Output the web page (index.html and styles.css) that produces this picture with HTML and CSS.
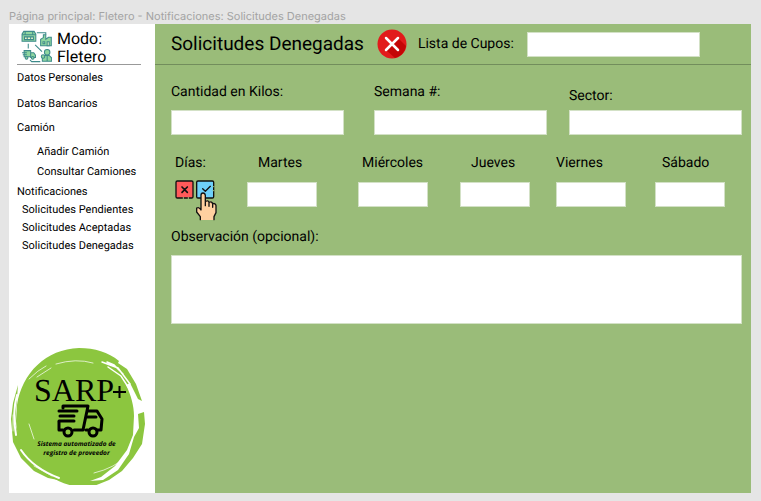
FILE: index.html
```html
<!DOCTYPE html>
<html lang="es">
<head>
<meta charset="utf-8">
<title>Fletero - Solicitudes Denegadas</title>
<link rel="stylesheet" href="styles.css">
</head>
<body>
<p class="caption">Página principal: Fletero - Notificaciones: Solicitudes Denegadas</p>
<div class="frame">
  <aside class="sidebar">
    <div class="mode">
      <svg class="mode-icon" viewBox="0 0 90 96" aria-hidden="true">
        <g fill="#8fd6a0" stroke="#3d8a8a" stroke-width="3">
          <path d="M3 12 8 4h30l5 8v21H3z"/>
          <path d="M3 14h40M12 4v10M34 4v10" />
          <path fill="#e9f5c9" d="M10 20h26v8H10zM18 20v8M28 20v8"/>
          <path d="M57 46V27l8-5V14h7v13l8-6h8v25z"/>
          <path fill="#e9f5c9" d="M64 34h5v6h-5zM76 34h6v12h-6z"/>
          <path d="M9 60h19v18H9zM28 66h9l5 7v7H28z"/>
          <circle cx="16" cy="81" r="4"/><circle cx="34" cy="81" r="4"/>
          <path fill="#e9f5c9" d="M3 66h14M5 72h12"/>
          <circle cx="76" cy="65" r="8"/>
          <path d="M62 91V81l8-7h12l7 7v10zM76 75v15"/>
          <circle cx="64" cy="77" r="5"/>
        </g>
        <path d="M46 8h26v6M21 40v14M41 43l20 20M26 87l5 5h25" fill="none" stroke="#3d8a8a" stroke-width="3"/>
      </svg>
      <p class="mode-name">Modo: Fletero</p>
    </div>
    <nav class="menu">
      <a class="roomy" href="#">Datos Personales</a>
      <a class="group" href="#">Datos Bancarios</a>
      <a class="group" href="#">Camión</a>
      <a class="deep" href="#">Añadir Camión</a>
      <a class="deep" href="#">Consultar Camiones</a>
      <a href="#">Notificaciones</a>
      <a class="sub" href="#">Solicitudes Pendientes</a>
      <a class="sub" href="#">Solicitudes Aceptadas</a>
      <a class="sub" href="#">Solicitudes Denegadas</a>
    </nav>
    <svg class="logo" viewBox="0 0 276 276" role="img" aria-label="SARP+">
      <g transform="scale(2)">
        <path fill="#8cc63f" d="M7 58C12 26 36 2 69 1c16 0 29 4 40 13l-1 2 9 6 9 15 6 17-4-2-8-16-4 2c5 10 8 21 8 31l-1 19-6 15-12 16-14 11-11 4 13-1 15-10 11-16 5-17 5-9-1-14 6-2 1 12-3 20-9 14-11 13-13 9-15 6-16 1C34 134 7 106 6 74z"/>
        <path fill="#8cc63f" d="m8 38-5 18-2 16 2 23 8 16 13 13 14 7 10 2-14-10L13 98 5 77z"/>
        <g fill="none" stroke="#fff" stroke-linecap="round">
          <path stroke-width="2" d="M6 88Q2 66 7 48M11 103q12 18 38 28"/>
          <path stroke-width="1.500" d="m92 15 16 6 12 16M98 20l13 9 11 17M97 15l7 3 9 9"/>
          <path stroke-width=".700" d="M46 17q20-6 37-1M19 32q9-9 17-13M27 30l14-9M24 92l-5-15M3 84V68M24 119l18 10M84 126q21-5 34-18"/>
        </g>
      </g>
      <text class="logo-name" x="48" y="108">SARP</text>
      <text class="tagline" x="133" y="198">Sistema automatizado de</text>
      <text class="tagline" x="133" y="216">registro de proveedor</text>
      <g transform="scale(2)">
        <path d="M103 45h13M109.500 39v12" stroke="#000" stroke-width="2"/>
        <g fill="none" stroke="#000" stroke-width="3" stroke-linejoin="round" stroke-linecap="round">
          <path d="M53 61v-2h25l-5 24H64M49 75v8h4M78 70h8M79 64h8l5 8-1 11h-4M76 83h2"/>
          <path d="M49 64h18M50 69h14M49 74h15"/>
          <circle cx="58" cy="85" r="4"/><circle cx="83" cy="85" r="4"/>
        </g>
      </g>
    </svg>
  </aside>
  <main class="main">
    <header class="topbar">
      <h1>Solicitudes Denegadas</h1>
      <svg class="denied" viewBox="0 0 30 30" aria-hidden="true">
        <circle cx="15" cy="15" r="14.500" fill="#e21b1b"/>
        <path d="m21 9 8 8a14.500 14.500 0 0 1-11 12l-9-8 6-6z" fill="#c40606"/>
        <path d="m9 9 12 12M21 9 9 21" stroke="#fff" stroke-width="2.500" stroke-linecap="round"/>
      </svg>
      <label for="cupos">Lista de Cupos:</label>
      <input id="cupos" type="text">
    </header>
    <form class="form">
      <div class="fields">
        <div class="field"><label for="kilos">Cantidad en Kilos:</label><input id="kilos" type="text"></div>
        <div class="field"><label for="semana">Semana #:</label><input id="semana" type="text"></div>
        <div class="field low"><label for="sector">Sector:</label><input id="sector" type="text"></div>
      </div>
      <div class="days">
        <div class="day pick">
          <span>Días:</span>
          <svg class="pick-icon" viewBox="0 0 126 126" aria-hidden="true">
            <g stroke="#111" stroke-width="4" stroke-linejoin="round" stroke-linecap="round">
              <rect x="3" y="3" width="51" height="51" rx="4" fill="#ff5a5a"/>
              <rect x="65" y="3" width="51" height="51" rx="4" fill="#6ed0fa"/>
              <path d="m21 21 16 16M37 21 21 37" stroke-width="5"/>
              <path d="m83 26 8 8 15-15" fill="none"/>
              <path stroke="none" fill="#ffd0a0" d="M76 120V110L66 96V83l8-1 4 8V47q0-8 7-7t6 8v14q8-4 11 3 8-3 10 4 10-3 11 7v22l-6 12v10z"/>
              <path fill="none" d="M76 119v-9L65 96V84q8-4 13 6V46q0-7 6-7t7 7v31M91 64q9-4 11 3v12M102 67q9-4 11 5v10M113 71q9-2 10 6v21l-6 12v9"/>
            </g>
            <path d="M25 51v7M40 51v7M113 20h5M113 32h5" stroke="#9abc79" stroke-width="3"/>
          </svg>
        </div>
        <div class="day wide"><label for="martes">Martes</label><input id="martes" type="text"></div>
        <div class="day near"><label for="miercoles">Miércoles</label><input id="miercoles" type="text"></div>
        <div class="day wide"><label for="jueves">Jueves</label><input id="jueves" type="text"></div>
        <div class="day"><label for="viernes">Viernes</label><input id="viernes" type="text"></div>
        <div class="day mid"><label for="sabado">Sábado</label><input id="sabado" type="text"></div>
      </div>
      <div class="notes">
        <label for="obs">Observación (opcional):</label>
        <textarea id="obs"></textarea>
      </div>
    </form>
  </main>
</div>
</body>
</html>
```
FILE: styles.css
```css
* { box-sizing: border-box; }

body {
  margin: 0;
  min-height: 100vh;
  padding: 0 10px 8px 9px;
  display: flex;
  flex-direction: column;
  background: #e5e5e5;
  color: #000;
  font: 14px/20px Roboto, sans-serif;
  text-rendering: geometricPrecision;
}

.caption {
  margin: 0;
  padding-top: 8px;
  font: 11px/16px Inter, sans-serif;
  color: #a3a3a3;
}

.frame { flex: 1; display: flex; }

.sidebar {
  flex: 0 0 146px;
  display: flex;
  flex-direction: column;
  background: #fff;
}

.mode {
  display: flex;
  gap: 5px;
  margin: 0 14px 0 8px;
  padding: 6px 0 0 4px;
  height: 41px;
  border-bottom: 1px solid #999;
}
.mode-icon { width: 31px; height: 33px; flex: none; }
.mode-name { margin: 0; font-size: 16px; line-height: 18px; }

.menu {
  display: flex;
  flex-direction: column;
  padding: 4px 0 0 8px;
  font-size: 11px;
  line-height: 18px;
}
.menu a { color: #000; text-decoration: none; }
.menu .roomy { margin-bottom: 8px; }
.menu .deep { padding-left: 20px; margin-bottom: 2px; }
.menu .group { margin-bottom: 6px; }
.menu .sub { padding-left: 5px; }

.logo { width: 138px; height: 138px; margin: auto 0 8px 1px; }
.logo-name { font: 64px "Liberation Serif", serif; }
.tagline { font: italic bold 13px "Open Sans", sans-serif; text-anchor: middle; }

.main { flex: 1; min-width: 0; background: #9abc79; }

.topbar {
  display: flex;
  align-items: center;
  height: 41px;
  padding-left: 16px;
  border-bottom: 1px solid #728d5c;
}
.topbar h1 { margin: 0; font-size: 19px; font-weight: 400; }
.denied { width: 30px; height: 30px; margin: 0 11px 0 13px; }
.topbar input { width: 173px; margin-left: 13px; }

input, textarea {
  display: block;
  border: 1px solid #d3e1c6;
  border-radius: 0;
  padding: 2px 4px;
  background: #fff;
  font: inherit;
  outline: none;
}
input { width: 100%; height: 25px; }

.form { padding: 17px 9px 0 16px; }

.fields {
  display: grid;
  grid-template-columns: 203fr 195fr 173fr;
}
.field label { display: block; height: 28px; }
.field input { width: 173px; }
.low label { padding-top: 4px; }

.days {
  display: grid;
  grid-template-columns: 76fr 111fr 102fr 96fr 99fr 87fr;
  margin-top: 18px;
}
.day label, .day span { display: block; height: 29px; }
.day input { width: 70px; }
.wide label { padding-left: 11px; }
.mid label { padding-left: 7px; }
.near label { padding-left: 4px; }
.pick { padding-left: 4px; }
.pick-icon { display: block; width: 42px; height: 42px; margin-top: -2px; }

.notes { margin-top: 5px; }
.notes label { display: block; height: 28px; }
.notes textarea { width: 100%; height: 69px; resize: none; }
```
